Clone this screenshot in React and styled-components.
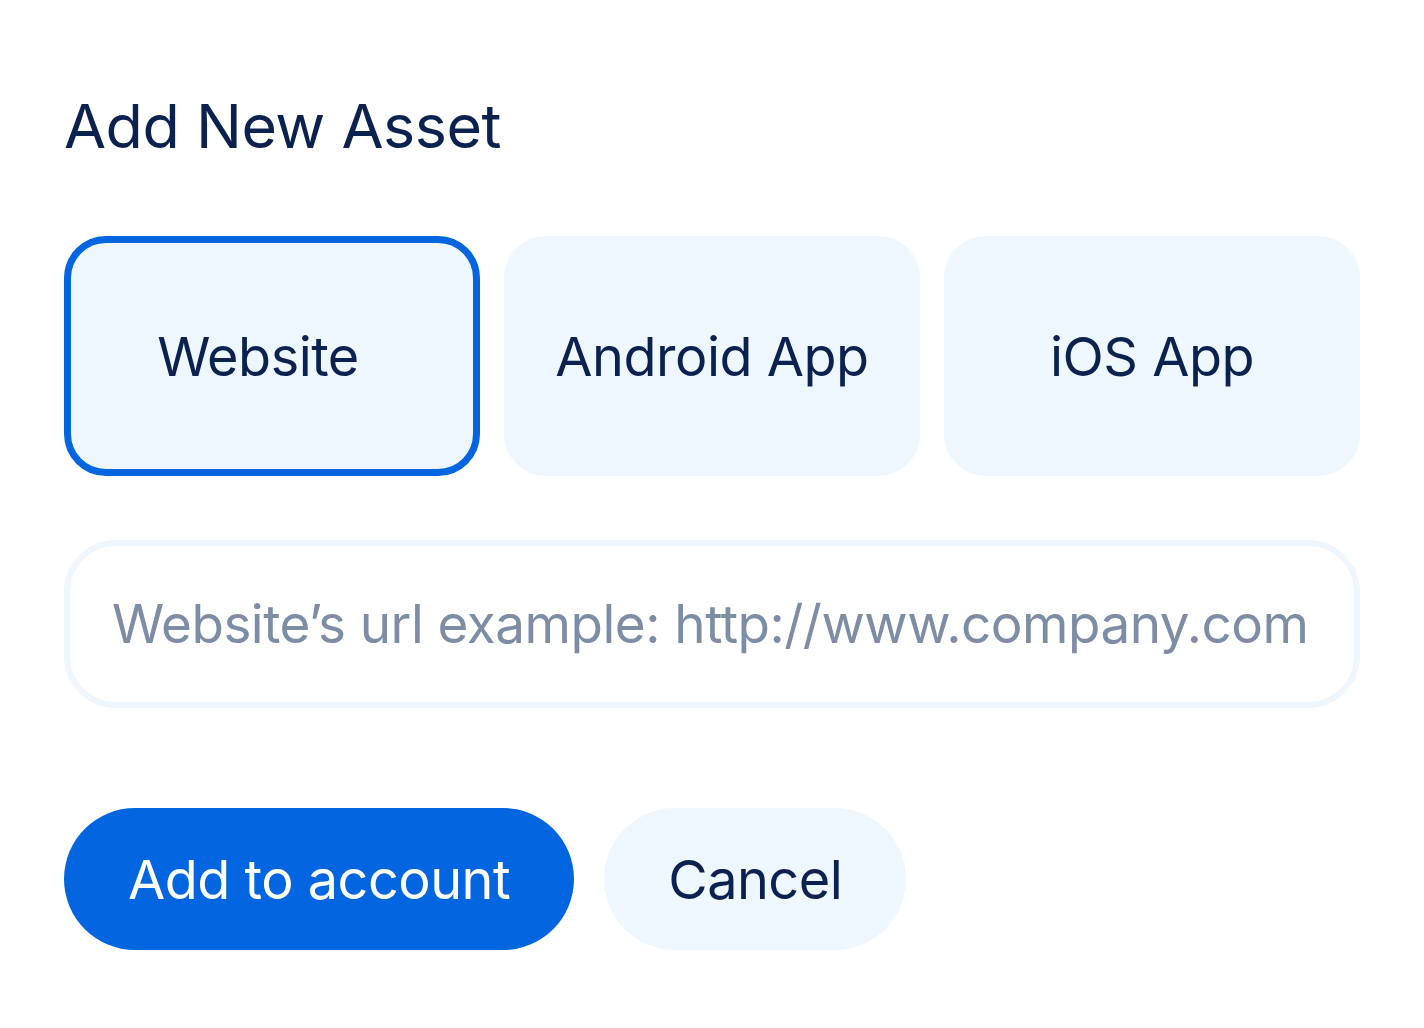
import React, { useState } from 'react'
import styled, { createGlobalStyle } from 'styled-components'

const GlobalStyle = createGlobalStyle`
  html, body {
    margin: 0;
    padding: 0;
    background: #ffffff;
  }
  body {
    font-family: Inter, "Noto Sans", "Liberation Sans", sans-serif;
    color: #0b2150;
  }
`

const Panel = styled.div`
  display: flex;
  flex-direction: column;
  padding: 90px 64px 64px;
`

const Title = styled.h1`
  margin: 0;
  font-size: 61px;
  font-weight: 400;
  line-height: 72px;
  letter-spacing: -0.5px;
  color: #0b2150;
`

const Choices = styled.div`
  display: grid;
  grid-template-columns: repeat(3, 1fr);
  gap: 24px;
  margin-top: 74px;
`

const Choice = styled.button`
  height: 240px;
  box-sizing: border-box;
  border-radius: 42px;
  border: 7px solid ${(p) => (p.$active ? '#0366e0' : 'transparent')};
  padding: 0 ${(p) => (p.$active ? '28px' : '0')} 0 0;
  background: #eef6fe;
  font-family: inherit;
  font-size: 54px;
  font-weight: 400;
  letter-spacing: -0.5px;
  color: #0b2150;
  cursor: pointer;
`

const UrlField = styled.input`
  margin-top: 64px;
  height: 168px;
  box-sizing: border-box;
  border: 6px solid #eef6fe;
  border-radius: 52px;
  padding: 0 42px;
  font-family: inherit;
  font-size: 53px;
  letter-spacing: -0.5px;
  color: #0b2150;
  outline: none;

  &::placeholder {
    color: #7d8da6;
  }
`

const Actions = styled.div`
  display: flex;
  gap: 30px;
  margin-top: 100px;
`

const Button = styled.button`
  height: 142px;
  padding: 0 64px;
  border: none;
  border-radius: 71px;
  background: ${(p) => (p.$primary ? '#0366e0' : '#eef6fe')};
  color: ${(p) => (p.$primary ? '#ffffff' : '#0b2150')};
  font-family: inherit;
  font-size: 54px;
  font-weight: 400;
  letter-spacing: -0.5px;
  cursor: pointer;
`

const kinds = ['Website', 'Android App', 'iOS App']

export default function App() {
  const [kind, setKind] = useState('Website')
  return (
    <>
      <GlobalStyle />
      <Panel>
        <Title>Add New Asset</Title>
        <Choices>
          {kinds.map((k) => (
            <Choice key={k} $active={k === kind} onClick={() => setKind(k)}>
              {k}
            </Choice>
          ))}
        </Choices>
        <UrlField placeholder="Website’s url example: http://www.company.com" />
        <Actions>
          <Button $primary>Add to account</Button>
          <Button>Cancel</Button>
        </Actions>
      </Panel>
    </>
  )
}
